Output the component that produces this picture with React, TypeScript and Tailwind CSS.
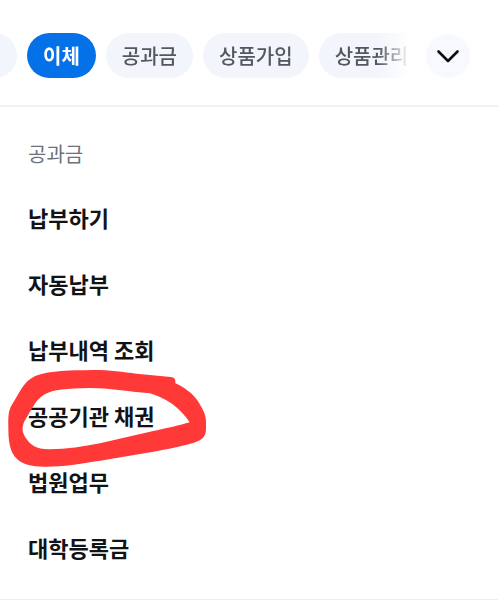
const categories = [
  { label: '이체', active: true },
  { label: '공과금', active: false },
  { label: '상품가입', active: false },
  { label: '상품관리', active: false },
];

const items = ['납부하기', '자동납부', '납부내역 조회', '공공기관 채권', '법원업무', '대학등록금'];
const circledItem = '공공기관 채권';

function HandDrawnCircle() {
  return (
    <svg
      aria-hidden="true"
      viewBox="0 90 630 330"
      className="pointer-events-none absolute top-1/2 left-0 h-[110px] w-[210px] -translate-y-1/2"
    >
      <path
        fill="#ff3838"
        fillRule="evenodd"
        d="M25 290C25 262 24 246 34 227L62 180C76 158 90 144 112 136C150 122 210 121 280 120C330 120 370 126 410 131L512 141C523 142 528 148 526 160C552 172 578 190 592 211C606 233 618 253 618 275V295C618 322 606 330 582 338C540 351 480 361 420 372L300 392C240 401 190 410 140 410C95 411 70 404 52 388C28 366 25 330 25 290Z
           M96 235C105 218 118 203 134 193C160 178 200 176 270 174C330 174 380 184 450 190C480 200 500 210 518 223C540 240 556 257 569 277C540 286 500 295 460 303L300 340C250 350 200 357 150 358C110 359 91 345 78 325C67 308 65 297 72 276Z"
      />
    </svg>
  );
}

export default function App() {
  return (
    <div className="w-full overflow-hidden bg-white font-['Noto_Sans_CJK_KR',sans-serif]">
      <header className="flex items-center gap-4 border-b-2 border-[#f0f1f3] pt-[33px] pr-7 pb-[27px]">
        <nav
          aria-label="메뉴 분류"
          className="flex min-w-0 flex-1 gap-[10px] overflow-hidden [mask-image:linear-gradient(to_right,black_calc(100%-32px),transparent)]"
        >
          <button
            type="button"
            aria-label="이전 분류"
            className="-ml-[52px] h-[45px] w-[69px] shrink-0 rounded-full bg-[#f2f5fb]"
          />
          {categories.map((category) => (
            <button
              key={category.label}
              type="button"
              aria-pressed={category.active}
              className={
                category.active
                  ? 'h-[45px] shrink-0 rounded-full bg-[#0571e8] px-4 text-[20px] leading-6 font-bold whitespace-nowrap text-white'
                  : 'h-[45px] shrink-0 rounded-full bg-[#f2f5fb] px-4 text-[20px] leading-6 font-medium whitespace-nowrap text-[#53575f]'
              }
            >
              {category.label}
            </button>
          ))}
        </nav>
        <button
          type="button"
          aria-label="분류 펼치기"
          className="flex size-[44px] shrink-0 items-center justify-center rounded-full bg-[#f7f9fe]"
        >
          <svg
            aria-hidden="true"
            viewBox="0 0 24 14"
            className="h-[14px] w-6"
            fill="none"
            stroke="#0c0d10"
            strokeWidth="2.6"
            strokeLinecap="round"
            strokeLinejoin="round"
          >
            <path d="M2.5 2.5L12 12L21.5 2.5" />
          </svg>
        </button>
      </header>

      <section className="border-b-2 border-[#eceef2] pt-[31px] pb-[19px]">
        <h2 className="px-7 text-[20px] leading-8 font-normal text-[#6d727a]">공과금</h2>
        <ul className="pt-[14px]">
          {items.map((item) => (
            <li key={item} className="relative">
              <a
                href="#"
                className="flex h-[66px] items-center px-7 text-[22px] leading-8 font-bold text-[#121316]"
              >
                {item}
              </a>
              {item === circledItem && <HandDrawnCircle />}
            </li>
          ))}
        </ul>
      </section>
    </div>
  );
}
